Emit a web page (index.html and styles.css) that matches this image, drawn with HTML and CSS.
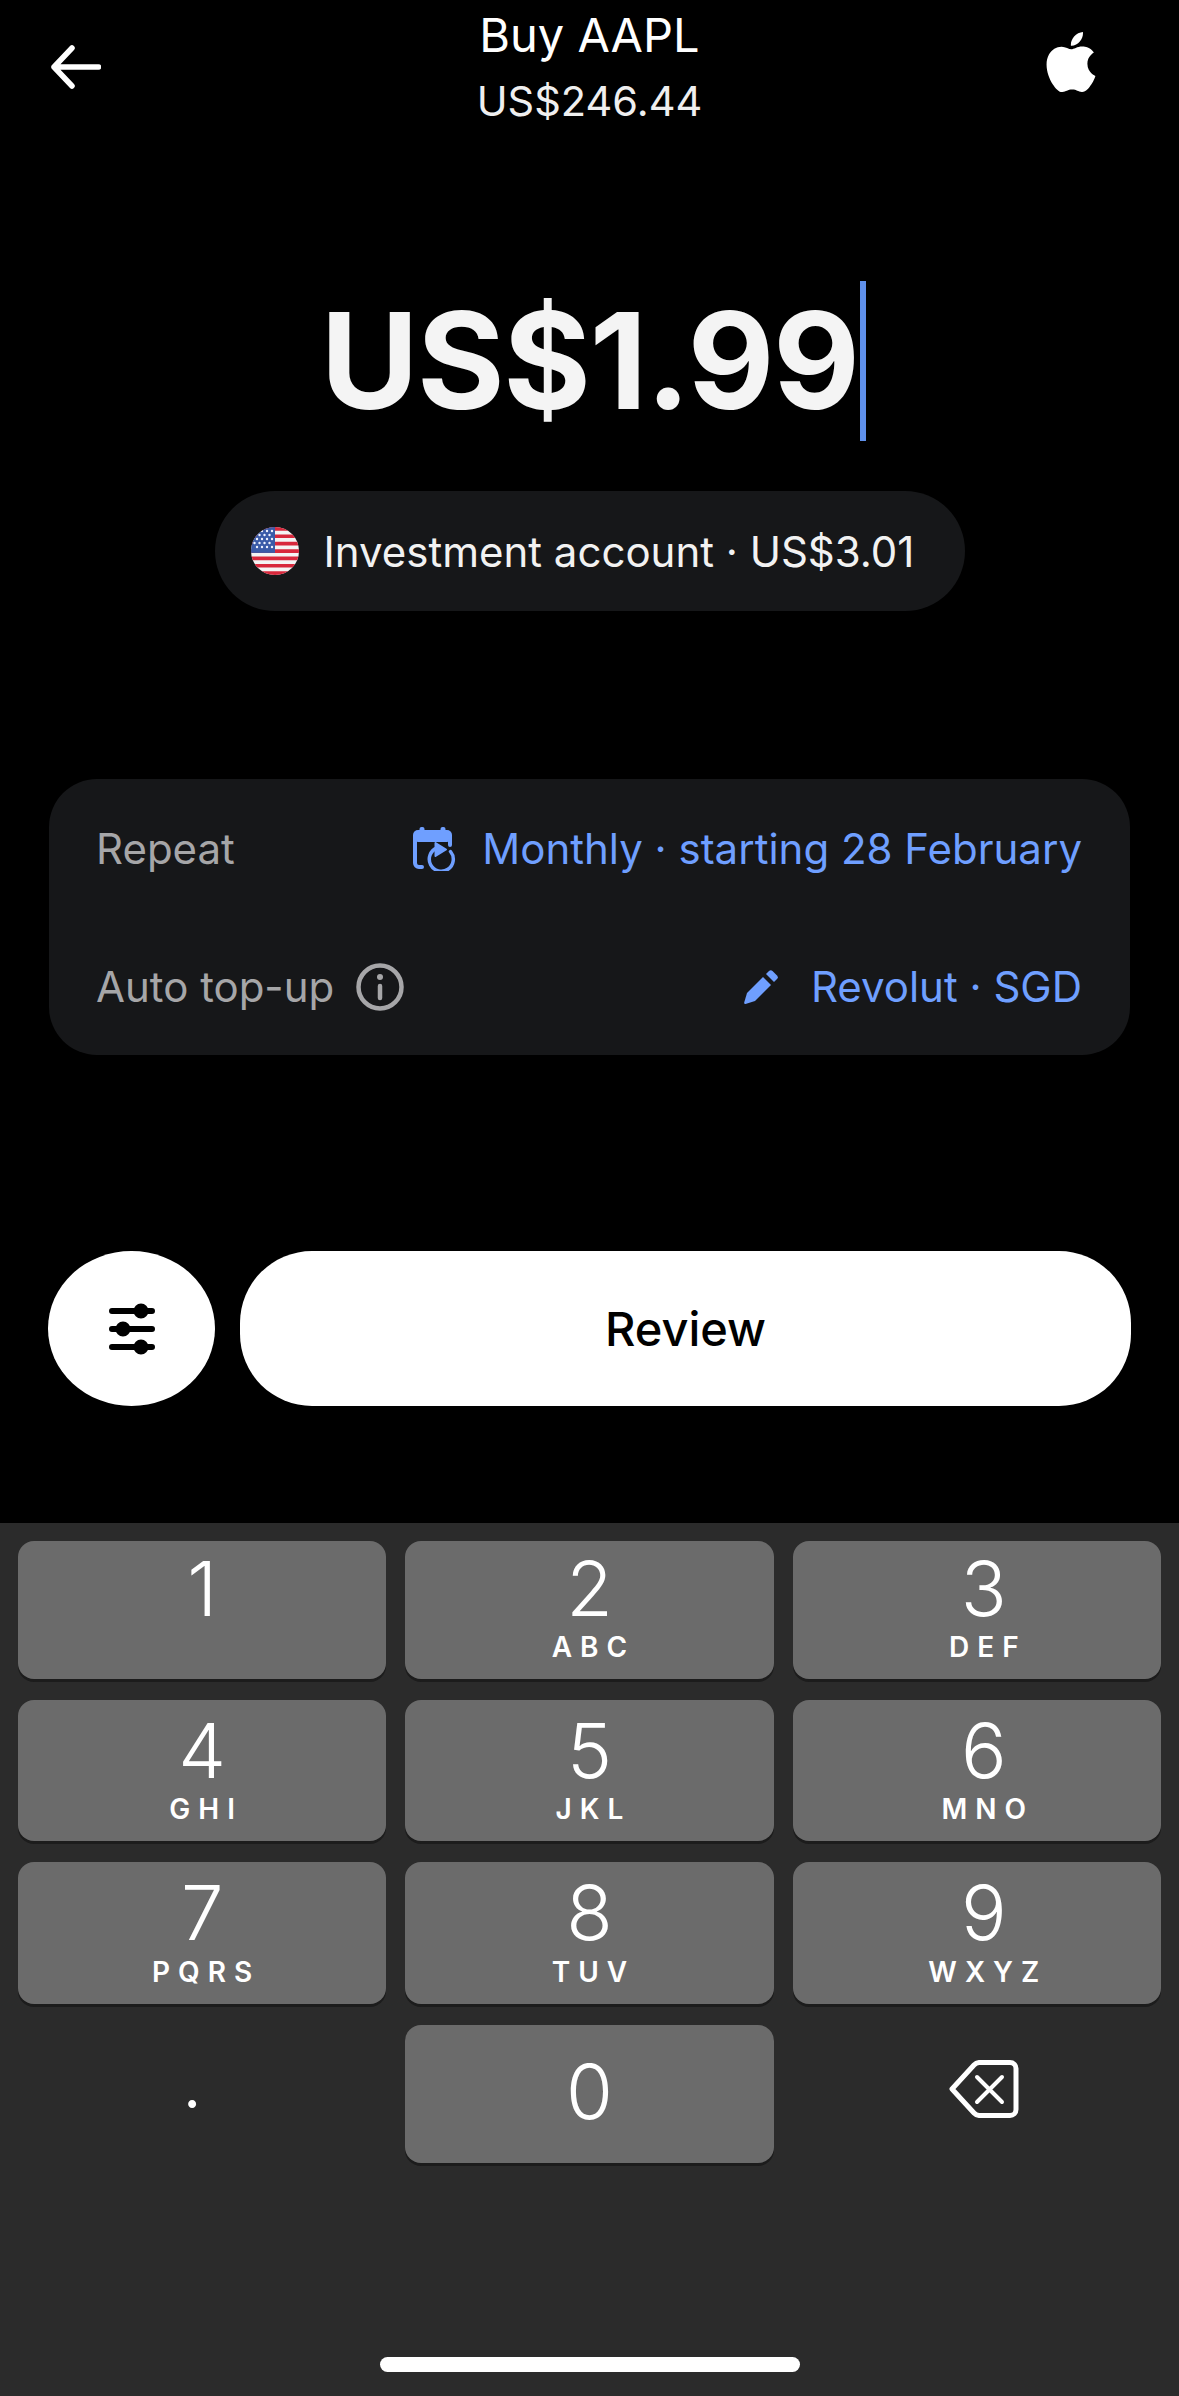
FILE: index.html
```html
<!DOCTYPE html>
<html lang="en">
<head>
<meta charset="UTF-8">
<title>Buy AAPL</title>
<link rel="stylesheet" href="styles.css">
</head>
<body>
<div class="screen">
  <div class="head">
    <svg class="back" viewBox="0 0 50 44" fill="none" stroke="#fff" stroke-width="5.5" stroke-linecap="round" stroke-linejoin="round"><path d="M47.5 22H3M21 3L3 22l18 19"/></svg>
    <div class="head-text">
      <div class="title">Buy AAPL</div>
      <div class="price">US$246.44</div>
    </div>
    <svg class="apple" viewBox="0 0 24 24" fill="#fff"><path d="M12.152 6.896c-.948 0-2.415-1.078-3.96-1.04-2.04.027-3.91 1.183-4.961 3.014-2.117 3.675-.546 9.103 1.519 12.09 1.013 1.454 2.208 3.09 3.792 3.039 1.52-.065 2.09-.987 3.935-.987 1.831 0 2.35.987 3.96.948 1.637-.026 2.676-1.48 3.676-2.948 1.156-1.688 1.636-3.325 1.662-3.415-.039-.013-3.182-1.221-3.22-4.857-.026-3.04 2.48-4.494 2.597-4.559-1.429-2.09-3.623-2.324-4.39-2.376-2-.156-3.675 1.09-4.61 1.09zM15.53 3.83c.843-1.012 1.4-2.427 1.245-3.83-1.207.052-2.662.805-3.532 1.818-.78.896-1.454 2.338-1.273 3.714 1.338.104 2.715-.688 3.559-1.701"/></svg>
  </div>

  <div class="amount">
    <span class="amount-text">US$1.99</span><span class="cursor"></span>
  </div>

  <div class="pill">
    <svg class="flag" viewBox="0 0 48 48">
      <defs><clipPath id="round"><circle cx="24" cy="24" r="24"/></clipPath></defs>
      <g clip-path="url(#round)">
        <rect width="48" height="48" fill="#f4f4f4"/>
        <path fill="#d8283c" d="M0 0h48v3.7H0zM0 7.4h48v3.7H0zM0 14.8h48v3.7H0zM0 22.2h48v3.7H0zM0 29.5h48v3.7H0zM0 36.9h48v3.7H0zM0 44.3h48V48H0z"/>
        <rect width="24" height="25.9" fill="#3b5ba8"/>
        <g fill="#f0f3ff">
          <circle cx="6" cy="4" r="1.2"/><circle cx="11" cy="4" r="1.2"/><circle cx="16" cy="4" r="1.2"/><circle cx="21" cy="4" r="1.2"/>
          <circle cx="3.500" cy="8" r="1.2"/><circle cx="8.500" cy="8" r="1.2"/><circle cx="13.500" cy="8" r="1.2"/><circle cx="18.500" cy="8" r="1.2"/>
          <circle cx="6" cy="12" r="1.2"/><circle cx="11" cy="12" r="1.2"/><circle cx="16" cy="12" r="1.2"/><circle cx="21" cy="12" r="1.2"/>
          <circle cx="3.500" cy="16" r="1.2"/><circle cx="8.500" cy="16" r="1.2"/><circle cx="13.500" cy="16" r="1.2"/><circle cx="18.500" cy="16" r="1.2"/>
          <circle cx="6" cy="20" r="1.2"/><circle cx="11" cy="20" r="1.2"/><circle cx="16" cy="20" r="1.2"/><circle cx="21" cy="20" r="1.2"/>
        </g>
      </g>
    </svg>
    <span>Investment account · US$3.01</span>
  </div>

  <div class="card">
    <div class="row">
      <span class="label">Repeat</span>
      <span class="value">
        <svg class="cal" viewBox="0 0 44 44" fill="none">
          <rect y="3" width="39" height="12" rx="5" fill="#6f9fff"/>
          <rect y="9" width="39" height="5" fill="#6f9fff"/>
          <rect x="6.500" width="5" height="6" rx="2" fill="#6f9fff"/>
          <rect x="27.500" width="5" height="6" rx="2" fill="#6f9fff"/>
          <path stroke="#6f9fff" stroke-width="4" stroke-linecap="round" d="M2 14v22a4 4 0 0 0 4 4h3M37 14v4"/>
          <path stroke="#6f9fff" stroke-width="3.500" stroke-linecap="round" d="M37.500 24.500A12 12 0 1 1 24 21"/>
          <path fill="#6f9fff" stroke="#6f9fff" stroke-width="2" stroke-linejoin="round" d="M22.500 16L33 22.500L22.500 29z"/>
        </svg>
        Monthly · starting 28 February
      </span>
    </div>
    <div class="row">
      <span class="label">Auto top-up
        <svg class="info" viewBox="0 0 48 48" fill="none" stroke="#a6a6a8" stroke-width="4.500"><circle cx="24" cy="24" r="21.500"/><path stroke-linecap="round" d="M24 23v12"/><circle cx="24" cy="14" r="3" fill="#a6a6a8" stroke="none"/></svg>
      </span>
      <span class="value">
        <svg class="pen" viewBox="0 0 34 34" fill="#6f9fff"><path d="M1.500 34c-.9 0-1.500-.7-1.300-1.600L3 23 19 7l8 8-16 16z"/><path d="M22 4l3-3a2.500 2.500 0 0 1 3.500 0l4.500 4.500a2.500 2.500 0 0 1 0 3.500l-3 3z"/></svg>
        Revolut · SGD
      </span>
    </div>
  </div>

  <div class="actions">
    <div class="round-btn">
      <svg class="sliders" viewBox="0 0 46 52" fill="#000" stroke="#000" stroke-linecap="round" stroke-width="6"><path d="M3 8h40M3 26h40M3 44h40"/><circle cx="32" cy="8" r="4.500"/><circle cx="14" cy="26" r="4.500"/><circle cx="32" cy="44" r="4.500"/></svg>
    </div>
    <div class="review">Review</div>
  </div>

  <div class="keyboard">
    <div class="keys">
      <div class="key"><span class="num">1</span></div>
      <div class="key"><span class="num">2</span><span class="abc">ABC</span></div>
      <div class="key"><span class="num">3</span><span class="abc">DEF</span></div>
      <div class="key"><span class="num">4</span><span class="abc">GHI</span></div>
      <div class="key"><span class="num">5</span><span class="abc">JKL</span></div>
      <div class="key"><span class="num">6</span><span class="abc">MNO</span></div>
      <div class="key"><span class="num">7</span><span class="abc">PQRS</span></div>
      <div class="key"><span class="num">8</span><span class="abc">TUV</span></div>
      <div class="key"><span class="num">9</span><span class="abc">WXYZ</span></div>
      <div class="key plain"><span class="dot">.</span></div>
      <div class="key zero"><span class="num">0</span></div>
      <div class="key plain">
        <svg class="del" viewBox="0 0 70 58" fill="none" stroke="#fff" stroke-width="5" stroke-linecap="round" stroke-linejoin="round"><path d="M3 29L25 5a8 8 0 0 1 5-2.500h31a6 6 0 0 1 6 6v41a6 6 0 0 1-6 6H30a8 8 0 0 1-5-2.500z"/><path stroke-width="4" d="M28 17l25 25M53 17L28 42"/></svg>
      </div>
    </div>
    <div class="home-bar"></div>
  </div>
</div>
</body>
</html>
```

FILE: styles.css
```css
body{margin:0;background:#000;}
.screen{
  width:1179px;
  height:2396px;
  overflow:hidden;
  display:flex;
  flex-direction:column;
  background:#000;
  color:#fff;
  font-family:Inter,"Liberation Sans",sans-serif;
}

/* top bar */
.head{
  height:130px;
  padding:0 51px;
  display:grid;
  grid-template-columns:1fr auto 1fr;
  align-items:start;
}
.back{width:50px;height:44px;margin-top:45px;}
.apple{width:60px;height:60px;margin:32px 27px 0 0;justify-self:end;}
.head-text{text-align:center;}
.title{font-size:47px;line-height:52px;margin-top:9px;font-weight:400;}
.price{font-size:41.5px;line-height:48px;margin-top:16px;color:#efefef;}

/* amount */
.amount{
  height:161px;
  margin-top:150px;
  display:flex;
  justify-content:center;
  align-items:center;
}
.amount-text{
  font-size:134px;
  font-weight:700;
  letter-spacing:-1.5px;
  color:#f4f4f4;
  line-height:161px;
  margin-left:8px;
}
.cursor{width:6px;height:160px;background:#5f90ea;margin-left:2px;}

/* account pill */
.pill{
  align-self:center;
  width:750px;
  height:120px;
  box-sizing:border-box;
  margin-top:50px;
  padding-left:36px;
  border-radius:60px;
  background:#161719;
  display:flex;
  align-items:center;
  gap:25px;
  font-size:42px;
  color:#f2f2f2;
}
.flag{width:48px;height:48px;}

/* repeat card */
.card{
  width:1081px;
  height:276px;
  box-sizing:border-box;
  margin:168px 0 0 49px;
  padding:12px 48px 12px 47px;
  border-radius:48px;
  background:#161719;
}
.row{
  height:115px;
  display:flex;
  justify-content:space-between;
  align-items:center;
  font-size:42px;
}
.row + .row{margin-top:23px;}
.label{color:#a6a6a8;display:flex;align-items:center;gap:22px;}
.value{color:#6f9fff;display:flex;align-items:center;}
.cal{width:44px;height:44px;margin-right:25px;}
.pen{width:34px;height:34px;margin-right:33px;}
.info{width:48px;height:48px;}

/* buttons */
.actions{
  display:flex;
  gap:25px;
  margin:196px 48px 0;
  height:155px;
}
.round-btn{
  width:167px;
  background:#fff;
  border-radius:50%;
  display:flex;
  align-items:center;
  justify-content:center;
}
.sliders{width:46px;height:52px;}
.review{
  flex:1;
  background:#fff;
  color:#000;
  border-radius:72px;
  display:flex;
  align-items:center;
  justify-content:center;
  font-size:47px;
  font-weight:500;
}

/* keypad */
.keyboard{
  flex:1;
  margin-top:117px;
  background:#2b2b2b;
  position:relative;
}
.keys{
  display:grid;
  grid-template-columns:repeat(3,1fr);
  grid-template-rows:138px 141px 142px 138px;
  row-gap:21px;
  column-gap:19px;
  padding:18px 18px 0;
}
.key{
  background:#6b6b6b;
  border-radius:16px;
  box-shadow:0 3px 0 #1c1c1c;
  display:flex;
  flex-direction:column;
  align-items:center;
}
.key:nth-child(3n){padding-left:14px;}
.key:nth-child(n+4) .num{margin-top:14px;}
.key.plain{background:none;box-shadow:none;justify-content:center;}
.num{font-size:76px;line-height:72px;margin-top:11px;font-weight:300;}
.abc{
  font-size:28px;
  line-height:28px;
  margin-top:auto;
  margin-bottom:18px;
  font-weight:600;
  letter-spacing:8px;
  margin-right:-8px;
}
.key.zero .num{margin-top:30px;}
.dot{font-size:60px;line-height:60px;margin:-16px 20px 0 0;font-weight:400;}
.del{width:70px;height:58px;margin-top:-10px;}
.home-bar{
  position:absolute;
  left:380px;
  bottom:24px;
  width:420px;
  height:15px;
  border-radius:8px;
  background:#fff;
}
```
